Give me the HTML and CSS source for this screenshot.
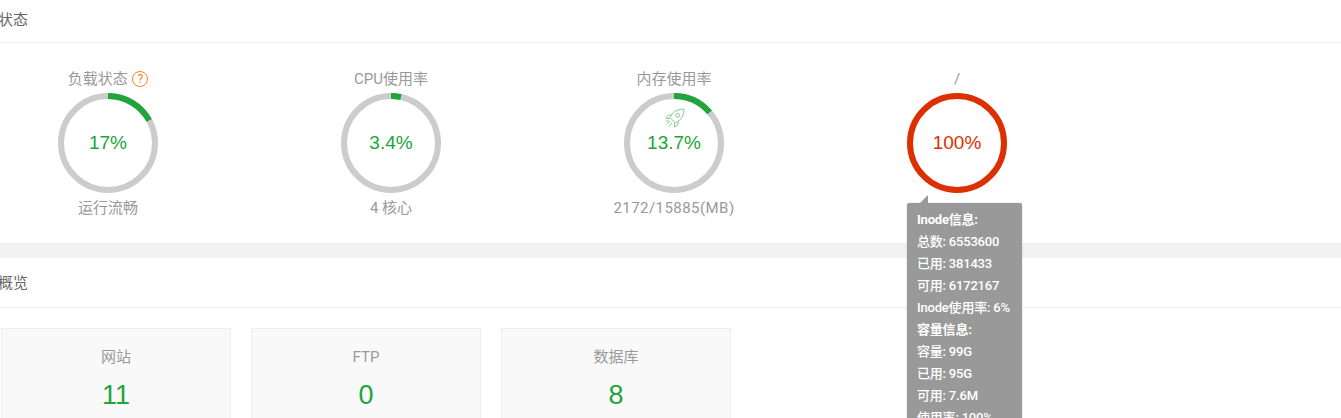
FILE: index.html
```html
<!DOCTYPE html>
<html lang="zh-CN">
<head>
<meta charset="utf-8">
<title>状态</title>
<link rel="stylesheet" href="styles.css">
</head>
<body>
<section class="panel status">
  <h2 class="title">状态</h2>
  <div class="gauges">
    <div class="gauge">
      <div class="label">负载状态 <span class="help">?</span></div>
      <div class="ring">
        <svg viewBox="0 0 100 100" class="ring-svg"><circle class="track" cx="50" cy="50" r="47"/><circle class="arc" cx="50" cy="50" r="47" pathLength="100" stroke-dasharray="17 100" transform="rotate(-90 50 50)"/></svg>
        <span class="pct">17%</span>
      </div>
      <div class="sub">运行流畅</div>
    </div>
    <div class="gauge">
      <div class="label">CPU使用率</div>
      <div class="ring">
        <svg viewBox="0 0 100 100" class="ring-svg"><circle class="track" cx="50" cy="50" r="47"/><circle class="arc" cx="50" cy="50" r="47" pathLength="100" stroke-dasharray="3.4 100" transform="rotate(-90 50 50)"/></svg>
        <span class="pct">3.4%</span>
      </div>
      <div class="sub">4 核心</div>
    </div>
    <div class="gauge">
      <div class="label">内存使用率</div>
      <div class="ring">
        <svg viewBox="0 0 100 100" class="ring-svg"><circle class="track" cx="50" cy="50" r="47"/><circle class="arc" cx="50" cy="50" r="47" pathLength="100" stroke-dasharray="13.7 100" transform="rotate(-90 50 50)"/></svg>
        <svg class="rocket" viewBox="0 0 20 20"><path d="M19 1c-5 0-9 1.700-11.800 5L5 9.500l5.500 5.500 3.500-2.200C17.300 10 19 6 19 1z"/><circle cx="12.700" cy="7.300" r="1.900"/><path d="M6.500 6.800l-3.500.4L1 10.500l4-.2M13.200 13.500l-.4 3.500-3.300 2 .2-4M5 13l-3.500 3M7 15l-3 3.500M3.500 12L1 13.500"/></svg>
        <span class="pct">13.7%</span>
      </div>
      <div class="sub wide">2172/15885(MB)</div>
    </div>
    <div class="gauge">
      <div class="label">/</div>
      <div class="ring">
        <svg viewBox="0 0 100 100" class="ring-svg"><circle class="track full" cx="50" cy="50" r="47"/></svg>
        <span class="pct danger">100%</span>
      </div>
      <div class="sub">&nbsp;</div>
      <div class="tip">
        <b>Inode信息:</b>
        <span>总数: 6553600</span>
        <span>已用: 381433</span>
        <span>可用: 6172167</span>
        <span>Inode使用率: 6%</span>
        <b>容量信息:</b>
        <span>容量: 99G</span>
        <span>已用: 95G</span>
        <span>可用: 7.6M</span>
        <span>使用率: 100%</span>
      </div>
    </div>
  </div>
</section>
<section class="panel overview">
  <h2 class="title">概览</h2>
  <div class="cards">
    <div class="card"><div class="card-name">网站</div><div class="card-num">11</div></div>
    <div class="card"><div class="card-name">FTP</div><div class="card-num">0</div></div>
    <div class="card"><div class="card-name">数据库</div><div class="card-num">8</div></div>
  </div>
</section>
</body>
</html>
```
FILE: styles.css
```css
* { box-sizing: border-box; }
html, body { margin: 0; height: 418px; overflow: hidden; background: #fff; }
body { font-family: Roboto, "Noto Sans CJK SC", sans-serif; font-size: 15px; color: #666; }
.panel { background: #fff; }
.title {
  margin: 0;
  height: 43px;
  padding-left: 0;
  text-indent: -2px;
  line-height: 37px;
  font-size: 15px;
  font-weight: 400;
  color: #666;
  border-bottom: 1px solid #eee;
  font-family: "Noto Sans CJK SC", sans-serif;
}
.status { height: 243px; }
.overview { border-top: 15px solid #f1f1f1; }
.overview .title { height: 50px; line-height: 48px; }
.gauges {
  display: grid;
  grid-template-columns: repeat(4, 216px);
  column-gap: 67px;
  padding-top: 26px;
}
.gauge { position: relative; display: flex; flex-direction: column; align-items: center; }
.label, .sub { color: #999; font-size: 15px; line-height: 20px; }
.label { height: 20px; }
.wide { letter-spacing: .45px; }
.help {
  display: inline-block;
  width: 16px;
  height: 16px;
  margin-left: 1px;
  border: 1px solid #f7871d;
  border-radius: 50%;
  color: #f7871d;
  font-size: 12px;
  line-height: 14px;
  text-align: center;
  vertical-align: 1px;
}
.ring { position: relative; width: 100px; height: 100px; margin-top: 4px; margin-bottom: 5px; display: flex; align-items: center; justify-content: center; }
.ring-svg { position: absolute; inset: 0; width: 100px; height: 100px; }
.track { fill: none; stroke: #ccc; stroke-width: 6; }
.track.full { stroke: #dd2f00; }
.arc { fill: none; stroke: #20a53a; stroke-width: 6; }
.pct { position: relative; font-size: 19px; color: #20a53a; font-family: "Liberation Sans", sans-serif; font-weight: 400; }
.pct.danger { color: #dd2f00; }
.rocket {
  position: absolute;
  left: 41px;
  top: 15px;
  width: 20px;
  height: 20px;
  fill: none;
  stroke: #7fcf8f;
  stroke-width: 1;
}
.tip {
  position: absolute;
  left: 50%;
  top: 134px;
  margin-left: -50px;
  width: 115px;
  padding: 6px 10px;
  background: #999;
  color: #fff;
  border-radius: 2px;
  box-shadow: 0 0 2px rgba(0, 0, 0, .2);
  font-size: 13px;
  font-weight: 500;
  letter-spacing: -.2px;
  line-height: 22px;
  white-space: nowrap;
  z-index: 2;
}
.tip::before {
  content: "";
  position: absolute;
  left: 13px;
  top: -8px;
  border-style: solid;
  border-width: 0 0 8px 8px;
  border-color: transparent transparent #999 transparent;
}
.tip b, .tip span { display: block; }
.cards { display: flex; gap: 20px; padding: 20px 0 0 1px; }
.card { width: 230px; height: 120px; background: #f9f9f9; border: 1px solid #eee; text-align: center; }
.card-name { margin-top: 18px; line-height: 20px; color: #999; }
.card-num { margin-top: 12px; font-family: "Liberation Sans", sans-serif; font-size: 27px; font-weight: 400; line-height: 32px; color: #20a53a; }
```
